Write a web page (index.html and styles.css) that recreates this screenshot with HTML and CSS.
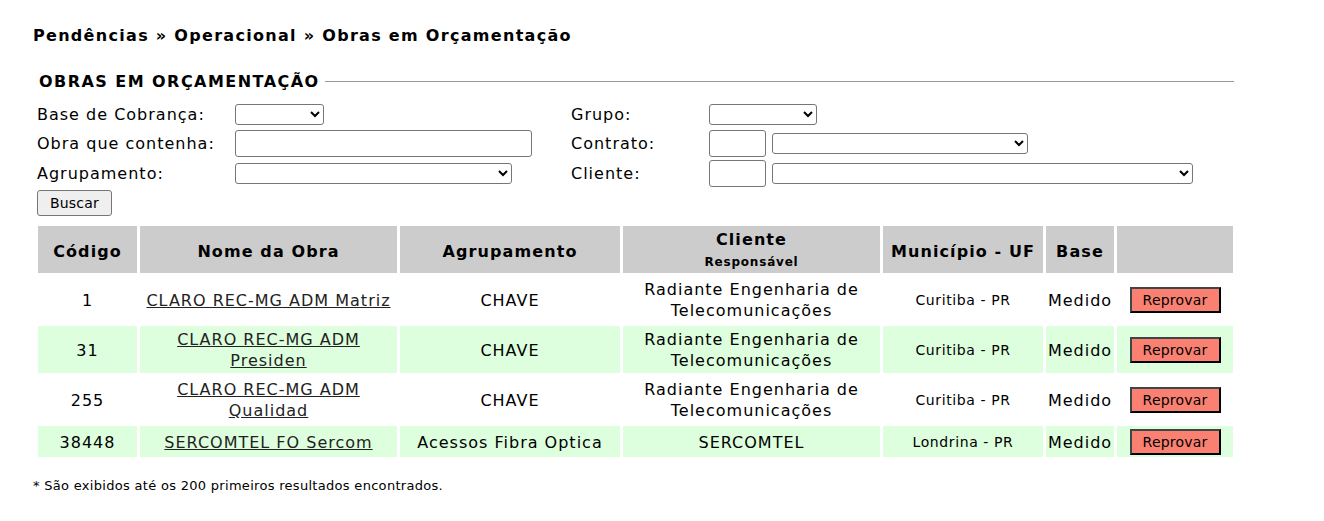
FILE: index.html
```html
<!DOCTYPE html>
<html lang="pt-BR">
<head>
  <meta charset="UTF-8" />
  <title>Obras em Orçamentação</title>
  <link rel="stylesheet" href="styles.css">
</head>
<body>

  <div class="page">
    <h1 class="breadcrumb">Pendências » Operacional » Obras em Orçamentação</h1>

    <fieldset class="filtro">
      <legend>OBRAS EM ORÇAMENTAÇÃO</legend>

      <table class="form-table">
        <tr>
          <td class="lbl">Base de Cobrança:</td>
          <td class="campo"><select class="sel-base"><option></option></select></td>
          <td class="lbl2">Grupo:</td>
          <td><select class="sel-grupo"><option></option></select></td>
        </tr>
        <tr>
          <td class="lbl">Obra que contenha:</td>
          <td class="campo"><input type="text" class="txt-obra"></td>
          <td class="lbl2">Contrato:</td>
          <td><input type="text" class="txt-cod"> <select class="sel-contrato"><option></option></select></td>
        </tr>
        <tr class="row-alta">
          <td class="lbl">Agrupamento:</td>
          <td class="campo"><select class="sel-agrup"><option></option></select></td>
          <td class="lbl2">Cliente:</td>
          <td><input type="text" class="txt-cod"> <select class="sel-cliente"><option></option></select></td>
        </tr>
      </table>

      <button class="btn-buscar">Buscar</button>

      <table class="grid">
        <thead>
          <tr>
            <th class="c-cod">Código</th>
            <th class="c-nome">Nome da Obra</th>
            <th class="c-agrup">Agrupamento</th>
            <th class="c-cli">Cliente<br><small>Responsável</small></th>
            <th class="c-mun">Município - UF</th>
            <th class="c-base">Base</th>
            <th class="c-acao"></th>
          </tr>
        </thead>
        <tbody>
          <tr>
            <td>1</td>
            <td><a href="#">CLARO REC-MG ADM Matriz</a></td>
            <td>CHAVE</td>
            <td>Radiante Engenharia de Telecomunicações</td>
            <td class="mun">Curitiba - PR</td>
            <td>Medido</td>
            <td><button class="btn-reprovar">Reprovar</button></td>
          </tr>
          <tr class="alt">
            <td>31</td>
            <td><a href="#">CLARO REC-MG ADM Presiden</a></td>
            <td>CHAVE</td>
            <td>Radiante Engenharia de Telecomunicações</td>
            <td class="mun">Curitiba - PR</td>
            <td>Medido</td>
            <td><button class="btn-reprovar">Reprovar</button></td>
          </tr>
          <tr>
            <td>255</td>
            <td><a href="#">CLARO REC-MG ADM Qualidad</a></td>
            <td>CHAVE</td>
            <td>Radiante Engenharia de Telecomunicações</td>
            <td class="mun">Curitiba - PR</td>
            <td>Medido</td>
            <td><button class="btn-reprovar">Reprovar</button></td>
          </tr>
          <tr class="alt">
            <td>38448</td>
            <td><a href="#">SERCOMTEL FO Sercom</a></td>
            <td>Acessos Fibra Optica</td>
            <td>SERCOMTEL</td>
            <td class="mun">Londrina - PR</td>
            <td>Medido</td>
            <td><button class="btn-reprovar">Reprovar</button></td>
          </tr>
        </tbody>
      </table>
    </fieldset>

    <p class="nota">* São exibidos até os 200 primeiros resultados encontrados.</p>
  </div>

</body>
</html>
```

FILE: styles.css
```css
* {
  box-sizing: border-box;
}

body {
  margin: 0;
  font-family: 'DejaVu Sans', Verdana, sans-serif;
  font-size: 16px;
  letter-spacing: 1px;
  color: #000;
  background: #fff;
}

.page {
  padding: 26px 0 0 33px;
}

.breadcrumb {
  font-size: 16px;
  font-weight: bold;
  letter-spacing: 1.3px;
  margin: 0 0 27px;
}

/* filtro */
.filtro {
  width: 1197px;
  min-width: 0;
  margin: 0 0 0 4px;
  padding: 0;
  border: none;
  border-top: 1px solid #999;
}

.filtro legend {
  font-size: 16px;
  font-weight: bold;
  letter-spacing: 1.45px;
  padding: 0 5px 0 2px;
  margin: 0;
}

.form-table {
  border-collapse: collapse;
  margin-top: 9px;
}

.form-table td {
  padding: 0;
  height: 29px;
  vertical-align: middle;
}

.form-table .row-alta td {
  height: 31px;
}

.lbl { width: 198px; }
.campo { width: 336px; }
.lbl2 { width: 138px; }

select, input {
  font-family: inherit;
  font-size: 14px;
  letter-spacing: 0;
  border: 1px solid #767676;
  border-radius: 3px;
  background: #fff;
  margin: 0;
  vertical-align: middle;
}

select { height: 21px; }
input { height: 27px; }

.sel-base { width: 89px; }
.sel-grupo { width: 108px; }
.txt-obra { width: 297px; }
.sel-agrup { width: 277px; }
.txt-cod { width: 57px; }
.sel-contrato { width: 256px; }
.sel-cliente { width: 421px; }

.btn-buscar {
  font-family: inherit;
  font-size: 14px;
  letter-spacing: 0.2px;
  width: 75px;
  height: 26px;
  margin-top: 1px;
  background: #efefef;
  border: 1px solid #767676;
  border-radius: 3px;
}

/* grade de resultados */
.grid {
  table-layout: fixed;
  width: 1201px;
  border-spacing: 3px;
  margin: 7px 0 0 -2px;
}

.grid th {
  background: #ccc;
  font-weight: bold;
  letter-spacing: 1.1px;
  height: 46px;
  padding: 3px 2px 0;
  line-height: 21px;
}

.grid th small {
  font-size: 12px;
  letter-spacing: 0.8px;
}

.grid td {
  text-align: center;
  padding: 3px 1px 2px;
  line-height: 21px;
}

.grid tr.alt td {
  background: #ddffdd;
}

.grid a {
  color: #222;
}

.c-cod { width: 99px; }
.c-nome { width: 257px; }
.c-agrup { width: 220px; }
.c-cli { width: 257px; }
.c-mun { width: 160px; }
.c-base { width: 68px; }
.c-acao { width: 116px; }

.grid td.mun {
  font-size: 14px;
  letter-spacing: 0.6px;
}

.btn-reprovar {
  font-family: inherit;
  font-size: 14px;
  letter-spacing: 0.2px;
  background: #fa8072;
  border: 2px solid;
  border-color: #3c4848 #000 #000 #3c4848;
  height: 26px;
  width: 91px;
  padding: 0;
  vertical-align: middle;
}

.nota {
  font-size: 13px;
  letter-spacing: 0.3px;
  margin: 18px 0 0;
}
```
